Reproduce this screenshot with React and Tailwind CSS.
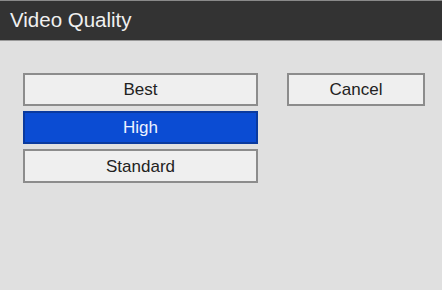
export default function App() {
  return (
    <div className="w-[442px] h-[290px] bg-[#e0e0e0] flex flex-col font-['Liberation_Sans',Arial,sans-serif] overflow-hidden">
      {/* Title bar */}
      <div className="h-[41px] bg-[#333333] border-t border-[#8a8a8a] border-b border-b-[#9a9a9a] flex items-center px-[10px]">
        <span className="text-[#f0f0f0] text-[20.5px] leading-none">Video Quality</span>
      </div>

      <div className="flex gap-[29px] pl-[23px] pt-[32px] border-l-[3px] border-[#d4d4d4] -ml-[3px]">
        <div className="flex flex-col gap-[5px] w-[235px]">
          <button className="h-[33px] bg-[#efefef] border-2 border-[#8c8c8c] text-[#222] text-[17px] leading-none">
            Best
          </button>
          <button className="h-[33px] bg-[#0b4cd3] border-2 border-[#0a3a9e] text-[#eef3ff] text-[17px] leading-none">
            High
          </button>
          <button className="h-[34px] bg-[#efefef] border-2 border-[#8c8c8c] text-[#222] text-[17px] leading-none">
            Standard
          </button>
        </div>
        <div>
          <button className="h-[33px] w-[138px] bg-[#efefef] border-2 border-[#8c8c8c] text-[#222] text-[17px] leading-none">
            Cancel
          </button>
        </div>
      </div>
    </div>
  );
}
